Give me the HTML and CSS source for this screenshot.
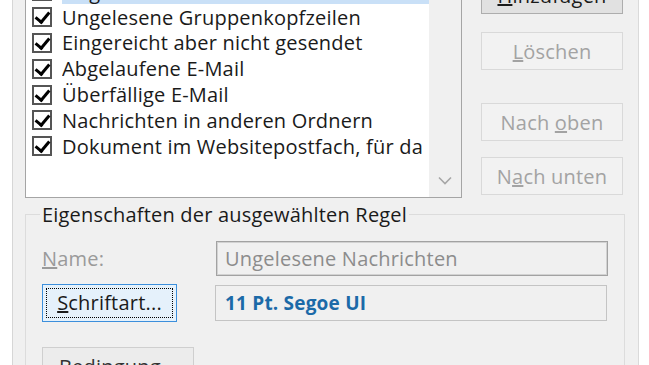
FILE: index.html
```html
<!DOCTYPE html>
<html lang="de">
<head>
    <meta charset="UTF-8">
    <title>Bedingte Formatierung</title>
    <link rel="stylesheet" href="styles.css">
</head>
<body>
    <div class="dialog">
        <div class="rules">
            <div class="rule-list">
                <ul class="rule-items">
                    <li class="rule"><span class="check"></span><span class="rule-name selected">Ungelesene Nachrichten</span></li>
                    <li class="rule"><span class="check"></span><span class="rule-name">Ungelesene Gruppenkopfzeilen</span></li>
                    <li class="rule"><span class="check"></span><span class="rule-name">Eingereicht aber nicht gesendet</span></li>
                    <li class="rule"><span class="check"></span><span class="rule-name">Abgelaufene E-Mail</span></li>
                    <li class="rule"><span class="check"></span><span class="rule-name">Überfällige E-Mail</span></li>
                    <li class="rule"><span class="check"></span><span class="rule-name">Nachrichten in anderen Ordnern</span></li>
                    <li class="rule"><span class="check"></span><span class="rule-name">Dokument im Websitepostfach, für da</span></li>
                </ul>
                <div class="scrollbar">
                    <svg class="scroll-down" width="14" height="9" viewBox="0 0 14 9">
                        <path d="M1 1.5 L7 7.5 L13 1.5" fill="none" stroke="#a6a6a6" stroke-width="1.6"/>
                    </svg>
                </div>
            </div>
            <div class="rule-buttons">
                <button class="btn btn-main"><u>H</u>inzufügen</button>
                <button class="btn btn-delete" disabled><u>L</u>öschen</button>
                <button class="btn btn-up" disabled>Nach <u>o</u>ben</button>
                <button class="btn btn-down" disabled>N<u>a</u>ch unten</button>
            </div>
        </div>

        <fieldset class="props">
            <legend>Eigenschaften der ausgewählten Regel</legend>
            <div class="prop-row">
                <label class="prop-label"><u>N</u>ame:</label>
                <div class="prop-field field-name">Ungelesene Nachrichten</div>
            </div>
            <div class="prop-row">
                <button class="btn btn-font"><span class="focus-ring"><u>S</u>chriftart...</span></button>
                <div class="prop-field field-font">11 Pt. Segoe UI</div>
            </div>
            <button class="btn btn-cond">Bedingung...</button>
        </fieldset>
    </div>
</body>
</html>
```

FILE: styles.css
```css
* {
    margin: 0;
    padding: 0;
    box-sizing: border-box;
}

html, body {
    height: 100%;
    overflow: hidden;
}

body {
    background: #ffffff;
    font-family: 'Open Sans', 'Noto Sans', sans-serif;
    font-size: 20px;
    letter-spacing: 0.2px;
    color: #1a1a1a;
}

.dialog {
    width: 627px;
    height: 420px;
    margin: -24px 0 0 12px;
    padding-left: 12px;
    background: #f0f0f0;
    border-left: 1px solid #d6d6d6;
    border-right: 1px solid #dadada;
}

.rules {
    display: flex;
    gap: 19px;
}

/* list with checkboxes */
.rule-list {
    width: 437px;
    height: 222px;
    display: flex;
    background: #ffffff;
    border: 1px solid #a5a5a5;
}

.rule-items {
    list-style: none;
    flex: 1;
    min-width: 0;
    padding-top: 1.5px;
    overflow: hidden;
}

.rule {
    height: 25.8px;
    display: flex;
    align-items: center;
    white-space: nowrap;
    padding-left: 6px;
}

.check {
    width: 20px;
    height: 20px;
    flex: none;
    margin-right: 10px;
    border: 2px solid #555;
    background: #fff;
    position: relative;
}

.check::after {
    content: "";
    position: absolute;
    left: 4px;
    top: 0px;
    width: 6px;
    height: 11px;
    border: solid #000;
    border-width: 0 3px 3px 0;
    transform: rotate(40deg);
}

.rule-name {
    flex: 1;
    overflow: hidden;
    line-height: 25px;
}

.rule-name.selected {
    background: #c9e0f7;
}

.scrollbar {
    width: 32px;
    flex: none;
    background: #f0f0f0;
    display: flex;
    align-items: flex-end;
    justify-content: center;
    padding-bottom: 12px;
}

/* buttons */
.btn {
    font-family: inherit;
    font-size: 20px;
    letter-spacing: 0.2px;
    background: #e1e1e1;
    border: 1px solid #adadad;
    color: #1a1a1a;
    height: 38px;
    width: 142px;
}

.btn:disabled {
    background: #f2f2f2;
    border-color: #d9d9d9;
    color: #a3a3a3;
}

.rule-buttons {
    display: flex;
    flex-direction: column;
}

.btn-delete {
    margin-top: 18px;
}

.btn-up {
    margin-top: 33px;
}

.btn-down {
    margin-top: 16px;
}

/* group box */
.props {
    width: 600px;
    margin-top: 4px;
    padding: 0 0 0 16px;
    border: 1px solid #dcdcdc;
    height: 200px;
}

.props legend {
    margin-left: -2px;
    padding: 0 2px;
    line-height: 25px;
}

.prop-row {
    display: flex;
    align-items: center;
    margin-top: 14px;
}

.prop-row + .prop-row {
    margin-top: 8px;
}

.prop-label {
    width: 174px;
    color: #9a9a9a;
}

.prop-field {
    width: 392px;
    height: 35px;
    padding-left: 8px;
    display: flex;
    align-items: center;
    background: #f0f0f0;
}

.field-name {
    border: 1px solid #a2a2a2;
    box-shadow: inset 0 0 0 1px #d2d2d2;
    color: #8c8c8c;
}

.btn-font {
    width: 135px;
    margin-right: 38px;
    padding: 3px;
    background: #e5f1fb;
    border-color: #3c8fdc;
}

.focus-ring {
    display: block;
    height: 100%;
    line-height: 28px;
    border: 1px dotted #000;
}

.field-font {
    height: 36px;
    border: 1px solid #c4c4c4;
    font-weight: 700;
    font-size: 19px;
    color: #1b6aa8;
    padding-left: 9px;
}

.btn-cond {
    width: 152px;
    margin-top: 25px;
    background: #ececec;
    border-color: #cfcfcf;
    color: #333;
}
```
